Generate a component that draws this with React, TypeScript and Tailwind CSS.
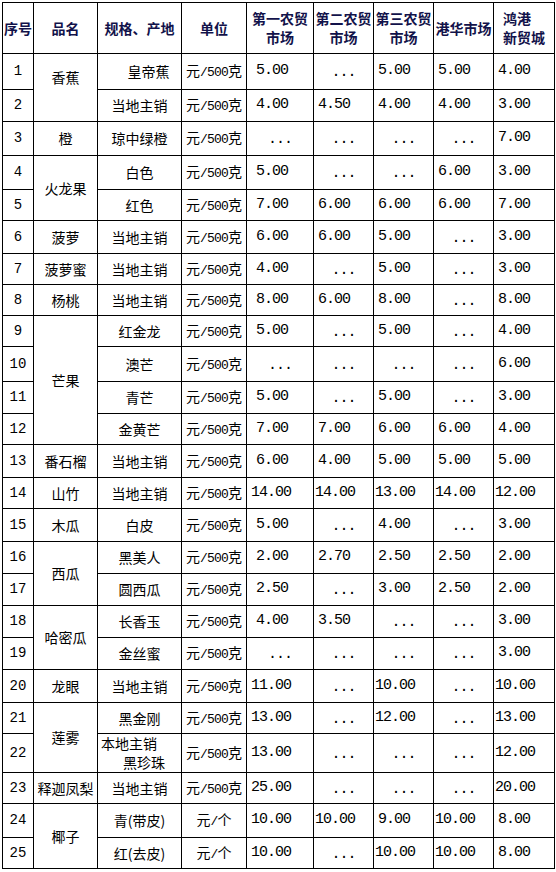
import React from 'react'

type Row = {
  no: number
  name?: string
  span?: number
  spec: string
  unit: string
  prices: string[]
  h: number
}

const rows: Row[] = [
  { no: 1, name: '香蕉', span: 2, spec: '皇帝蕉', unit: '元/500克', prices: ['5.00', '...', '5.00', '5.00', '4.00'], h: 35 },
  { no: 2, spec: '当地主销', unit: '元/500克', prices: ['4.00', '4.50', '4.00', '4.00', '3.00'], h: 31 },
  { no: 3, name: '橙', spec: '琼中绿橙', unit: '元/500克', prices: ['...', '...', '...', '...', '7.00'], h: 33 },
  { no: 4, name: '火龙果', span: 2, spec: '白色', unit: '元/500克', prices: ['5.00', '...', '...', '6.00', '3.00'], h: 33 },
  { no: 5, spec: '红色', unit: '元/500克', prices: ['7.00', '6.00', '6.00', '6.00', '7.00'], h: 30 },
  { no: 6, name: '菠萝', spec: '当地主销', unit: '元/500克', prices: ['6.00', '6.00', '5.00', '...', '3.00'], h: 32 },
  { no: 7, name: '菠萝蜜', spec: '当地主销', unit: '元/500克', prices: ['4.00', '...', '5.00', '...', '3.00'], h: 30 },
  { no: 8, name: '杨桃', spec: '当地主销', unit: '元/500克', prices: ['8.00', '6.00', '8.00', '...', '8.00'], h: 30 },
  { no: 9, name: '芒果', span: 4, spec: '红金龙', unit: '元/500克', prices: ['5.00', '...', '5.00', '...', '4.00'], h: 30 },
  { no: 10, spec: '澳芒', unit: '元/500克', prices: ['...', '...', '...', '...', '6.00'], h: 34 },
  { no: 11, spec: '青芒', unit: '元/500克', prices: ['5.00', '...', '5.00', '...', '3.00'], h: 31 },
  { no: 12, spec: '金黄芒', unit: '元/500克', prices: ['7.00', '7.00', '6.00', '6.00', '4.00'], h: 30 },
  { no: 13, name: '番石榴', spec: '当地主销', unit: '元/500克', prices: ['6.00', '4.00', '5.00', '5.00', '5.00'], h: 32 },
  { no: 14, name: '山竹', spec: '当地主销', unit: '元/500克', prices: ['14.00', '14.00', '13.00', '14.00', '12.00'], h: 30 },
  { no: 15, name: '木瓜', spec: '白皮', unit: '元/500克', prices: ['5.00', '...', '4.00', '...', '3.00'], h: 32 },
  { no: 16, name: '西瓜', span: 2, spec: '黑美人', unit: '元/500克', prices: ['2.00', '2.70', '2.50', '2.50', '2.00'], h: 31 },
  { no: 17, spec: '圆西瓜', unit: '元/500克', prices: ['2.50', '...', '3.00', '2.50', '2.00'], h: 31 },
  { no: 18, name: '哈密瓜', span: 2, spec: '长香玉', unit: '元/500克', prices: ['4.00', '3.50', '...', '...', '3.00'], h: 31 },
  { no: 19, spec: '金丝蜜', unit: '元/500克', prices: ['...', '...', '...', '...', '3.00'], h: 31 },
  { no: 20, name: '龙眼', spec: '当地主销', unit: '元/500克', prices: ['11.00', '...', '10.00', '...', '10.00'], h: 32 },
  { no: 21, name: '莲雾', span: 2, spec: '黑金刚', unit: '元/500克', prices: ['13.00', '...', '12.00', '...', '13.00'], h: 30 },
  { no: 22, spec: '本地主销|黑珍珠', unit: '元/500克', prices: ['13.00', '...', '...', '...', '12.00'], h: 38 },
  { no: 23, name: '释迦凤梨', spec: '当地主销', unit: '元/500克', prices: ['25.00', '...', '...', '...', '20.00'], h: 30 },
  { no: 24, name: '椰子', span: 2, spec: '青(带皮)', unit: '元/个', prices: ['10.00', '10.00', '9.00', '10.00', '8.00'], h: 33 },
  { no: 25, spec: '红(去皮)', unit: '元/个', prices: ['10.00', '...', '10.00', '10.00', '8.00'], h: 30 },
]

const cjk = "font-['Noto_Sans_CJK_SC',sans-serif]"
const mono = "font-['Liberation_Mono','Noto_Sans_CJK_SC',monospace]"
const spanClass: Record<number, string> = { 2: 'row-span-2', 4: 'row-span-4' }

function Head({ children, left }: { children: React.ReactNode; left?: boolean }) {
  return (
    <div className={`flex items-center justify-center bg-white text-[14px] leading-[19px] font-bold text-[#12124a] ${cjk}`}>
      <div className={left ? 'text-left' : 'text-center'}>{children}</div>
    </div>
  )
}

function Price({ v, col }: { v: string; col: number }) {
  if (v === '...') {
    return (
      <div className={`flex items-center justify-center bg-white pt-[4px] text-[15px] tracking-[-1px] ${mono}`}>...</div>
    )
  }
  const long = v.length > 4
  const pad = col === 0 ? (long ? 'pl-[4px]' : 'pl-[9px]') : long ? 'pl-[1px]' : 'pl-[4px]'
  return <div className={`flex items-center bg-white text-[15px] tracking-[-1px] ${pad} ${mono}`}>{v}</div>
}

function Spec({ text, no }: { text: string; no: number }) {
  if (text.includes('|')) {
    const [a, b] = text.split('|')
    return (
      <div className={`flex flex-col justify-center bg-white text-[14px] leading-[19px] ${cjk}`}>
        <span className="pl-[3px]">{a}</span>
        <span className="pl-[25px]">{b}</span>
      </div>
    )
  }
  return (
    <div className={`flex items-center justify-center bg-white text-[14px] ${no === 1 ? 'pl-[18px]' : ''} ${cjk}`}>
      {text}
    </div>
  )
}

function Unit({ unit }: { unit: string }) {
  const tail = unit.slice(1, -1)
  return (
    <div className={`flex items-center justify-center bg-white text-[14px] ${cjk}`}>
      <span>
        元<span className={`text-[13px] tracking-[-0.8px] ${mono}`}>{tail}</span>
        {unit.slice(-1)}
      </span>
    </div>
  )
}

export default function App() {
  const rowHeights = ['50px', ...rows.map((r) => `${r.h}px`)].join(' ')
  return (
    <div className="min-h-[872px] bg-white pl-[2px] pt-[2px] text-black">
      <div
        className="grid w-[553px] grid-cols-[30px_63px_83px_64px_66px_59px_59px_59px_60px] gap-px bg-black p-px"
        style={{ gridTemplateRows: rowHeights }}
      >
        <Head>序号</Head>
        <Head>品名</Head>
        <Head>规格、产地</Head>
        <Head>单位</Head>
        <Head>
          第一农贸
          <br />
          市场
        </Head>
        <Head>
          第二农贸
          <br />
          市场
        </Head>
        <Head>
          第三农贸
          <br />
          市场
        </Head>
        <Head>港华市场</Head>
        <Head left>
          鸿港
          <br />
          新贸城
        </Head>

        {rows.map((r) => (
          <React.Fragment key={r.no}>
            <div className={`flex items-center justify-center bg-white text-[14px] ${mono}`}>{r.no}</div>
            {r.name && (
              <div
                className={`flex items-center justify-center bg-white text-[14px] ${cjk} ${r.span ? spanClass[r.span] : ''} ${r.no === 1 ? 'pb-[20px]' : ''}`}
              >
                {r.name}
              </div>
            )}
            <Spec text={r.spec} no={r.no} />
            <Unit unit={r.unit} />
            {r.prices.map((p, i) => (
              <Price key={i} v={p} col={i} />
            ))}
          </React.Fragment>
        ))}
      </div>
    </div>
  )
}
